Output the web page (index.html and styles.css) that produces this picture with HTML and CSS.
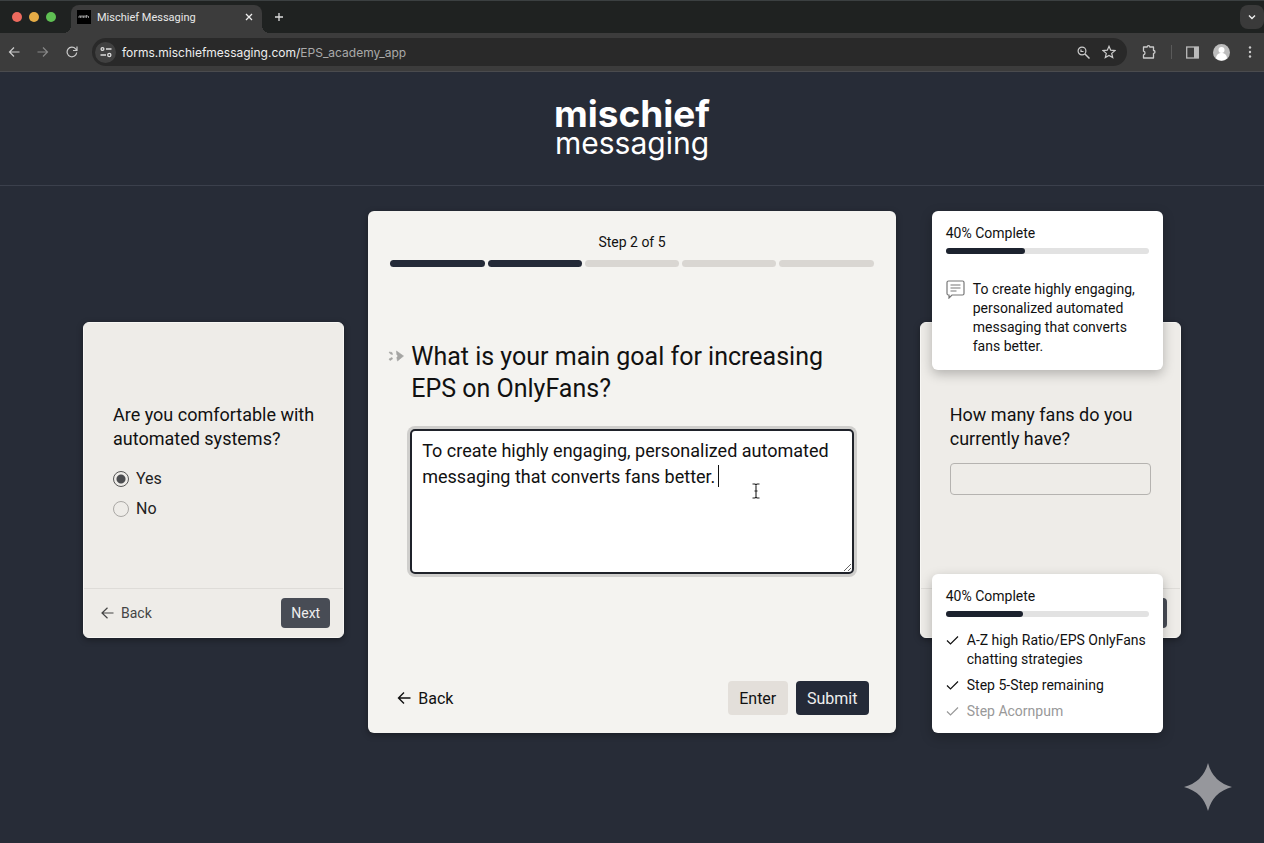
FILE: index.html
```html
<!DOCTYPE html>
<html lang="en">
<head>
  <meta charset="UTF-8" />
  <meta name="viewport" content="width=device-width, initial-scale=1.0" />
  <title>Mischief Messaging</title>
  <link rel="stylesheet" href="styles.css">
</head>
<body>
  <!-- Browser window -->
  <div class="browser">
    <div class="tab-strip">
      <div class="lights">
        <span class="light red"></span>
        <span class="light yellow"></span>
        <span class="light green"></span>
      </div>
      <div class="tab">
        <svg class="favicon" viewBox="0 0 14 14"><rect width="14" height="14" fill="#000"/><path d="M2 6v2M3.500 6v2M5 6v2M6.500 6v2M8 6v2M9.500 5v3M11.500 6v2M2 6h9" stroke="#aaa" stroke-width=".8"/></svg>
        <span class="tab-title">Mischief Messaging</span>
        <button class="icon-btn" aria-label="Close tab">
          <svg width="8" height="8" viewBox="0 0 8 8"><path d="M1 1l6 6M7 1L1 7" stroke="#eee" stroke-width="1.300"/></svg>
        </button>
      </div>
      <button class="icon-btn new-tab" aria-label="New tab">
        <svg width="10" height="10" viewBox="0 0 10 10"><path d="M5 1v8M1 5h8" stroke="#ddd" stroke-width="1.300"/></svg>
      </button>
      <button class="icon-btn tab-menu" aria-label="Search tabs">
        <svg width="8" height="6" viewBox="0 0 8 6"><path d="M1 1.500l3 3 3-3" fill="none" stroke="#eee" stroke-width="1.400"/></svg>
      </button>
    </div>
    <div class="toolbar">
      <div class="nav">
        <button class="icon-btn" aria-label="Back">
          <svg width="12" height="12" viewBox="0 0 12 12"><path d="M11.500 6H1.500M6 1.500L1.500 6 6 10.500" fill="none" stroke="#ccc" stroke-width="1.200"/></svg>
        </button>
        <button class="icon-btn" aria-label="Forward">
          <svg width="12" height="12" viewBox="0 0 12 12"><path d="M.5 6h10M6 1.500L10.500 6 6 10.500" fill="none" stroke="#888" stroke-width="1.200"/></svg>
        </button>
        <button class="icon-btn" aria-label="Reload">
          <svg width="12" height="12" viewBox="0 0 12 12"><path d="M10.700 6.500A4.800 4.800 0 1 1 9.600 2.900L11 4.300M11 .5v4H7" fill="none" stroke="#ccc" stroke-width="1.200"/></svg>
        </button>
      </div>
      <div class="address">
        <button class="site-info" aria-label="Site information">
          <svg width="12" height="12" viewBox="0 0 12 12" fill="none" stroke="#ddd" stroke-width="1.300"><circle cx="2.500" cy="3" r="1.400"/><path d="M6 3h5.500M.5 9H6"/><circle cx="9.300" cy="9" r="1.600"/></svg>
        </button>
        <span class="url">forms.mischiefmessaging.com/<span class="path">EPS_academy_app</span></span>
        <button class="icon-btn" aria-label="Zoom">
          <svg width="13" height="13" viewBox="0 0 13 13" fill="none" stroke="#ccc" stroke-width="1.200"><circle cx="5" cy="5" r="3.900"/><path d="M8 8l4.500 4.500" stroke-width="1.500"/><path d="M4 3.500v2h2.500"/></svg>
        </button>
        <button class="icon-btn" aria-label="Bookmark">
          <svg width="14" height="14" viewBox="0 0 14 14"><path d="M7 1.300l1.700 3.900 4.200.4-3.200 2.800 1 4.200L7 10.400l-3.700 2.200 1-4.200L1.100 5.600l4.200-.4z" fill="none" stroke="#ccc" stroke-width="1.200"/></svg>
        </button>
      </div>
      <button class="icon-btn" aria-label="Extensions">
        <svg width="16" height="16" viewBox="0 0 16 16"><path d="M3 3h3.200c0-1.900 2.600-1.900 2.600 0H12.500v3.500c2 0 2 2.800 0 2.800V14H2.500v-3.200c2-.3 2-3.300 0-3.600V3z" fill="none" stroke="#ccc" stroke-width="1.300" stroke-linejoin="round"/></svg>
      </button>
      <span class="divider"></span>
      <button class="icon-btn" aria-label="Side panel">
        <svg width="13" height="13" viewBox="0 0 13 13"><rect x=".7" y="1" width="11.600" height="11" fill="none" stroke="#bbb" stroke-width="1.300"/><path d="M8 1h4.500v11H8z" fill="#bbb"/></svg>
      </button>
      <button class="icon-btn profile" aria-label="Profile">
        <svg width="17" height="17" viewBox="0 0 17 17"><circle cx="8.500" cy="8.500" r="8.500" fill="#bdbdbd"/><circle cx="8.500" cy="6" r="3" fill="#fff"/><path d="M3 14.500c0-7.300 11-7.300 11 0a8.500 8.500 0 0 1-11 0z" fill="#fff"/></svg>
      </button>
      <button class="icon-btn" aria-label="Menu">
        <svg width="4" height="12" viewBox="0 0 4 12" fill="#ccc"><circle cx="2" cy="1.500" r="1.200"/><circle cx="2" cy="6" r="1.200"/><circle cx="2" cy="10.500" r="1.200"/></svg>
      </button>
    </div>
  </div>

  <header class="site-header">
    <div class="logo">
      <span class="logo-top">mischief</span>
      <span class="logo-bottom">messaging</span>
    </div>
  </header>

  <main class="steps">
    <!-- Previous question -->
    <form class="card side-card">
      <div class="side-body">
        <h2>Are you comfortable with automated systems?</h2>
        <div class="options">
          <label><input type="radio" name="automated" checked> Yes</label>
          <label><input type="radio" name="automated"> No</label>
        </div>
      </div>
      <div class="side-footer">
        <button type="button" class="back">
          <svg width="13" height="12" viewBox="0 0 13 12"><path d="M12.500 6H1M6.500 .8L1 6l5.500 5.200" fill="none" stroke="currentColor" stroke-width="1.200"/></svg>
          Back
        </button>
        <button type="button" class="next">Next</button>
      </div>
    </form>

    <!-- Current question -->
    <form class="card main-card">
      <p class="step-label">Step 2 of 5</p>
      <div class="segments">
        <span class="segment done"></span>
        <span class="segment done"></span>
        <span class="segment"></span>
        <span class="segment"></span>
        <span class="segment"></span>
      </div>
      <div class="question">
        <svg class="marker" width="16" height="12" viewBox="0 0 16 12" fill="#a5a5a3"><path d="M1 2l3 .5.5 2-2-.5zM1 9l3-1.500.5 1.500L2 10.500zM8.500 1L15.500 6l-6 5-.7-3.500L10 6 8.800 4.500z" stroke="#a5a5a3" stroke-width=".6"/></svg>
        <h1><label for="goal">What is your main goal for increasing EPS on OnlyFans?</label></h1>
      </div>
      <div class="answer">
        <textarea id="goal" spellcheck="false">To create highly engaging, personalized automated messaging that converts fans better.</textarea>
        <span class="caret"></span>
        <svg class="ibeam" width="8" height="16" viewBox="0 0 8 16"><path d="M.5 1H3l1 1 1-1h2.500M4 2v12M.5 15H3l1-1 1 1h2.500M2.500 8h3" fill="none" stroke="#222" stroke-width="1.100"/></svg>
      </div>
      <div class="main-footer">
        <button type="button" class="back">
          <svg width="14" height="12" viewBox="0 0 14 12"><path d="M13.500 6H1.500M7 .5L1.500 6 7 11.500" fill="none" stroke="currentColor" stroke-width="1.400"/></svg>
          Back
        </button>
        <button type="button" class="enter">Enter</button>
        <button type="button" class="submit">Submit</button>
      </div>
    </form>

    <!-- Next question with the two summary cards on top -->
    <div class="stack">
      <form class="card side-card">
        <div class="side-body">
          <h2><label for="fans">How many fans do you currently have?</label></h2>
          <input type="text" id="fans" class="fans">
        </div>
        <div class="side-footer">
          <button type="button" class="next">Next</button>
        </div>
      </form>

      <section class="summary summary-top">
        <p>40% Complete</p>
        <div class="bar"><div class="bar-fill" style="width: 39%"></div></div>
        <div class="message">
          <svg width="19" height="19" viewBox="0 0 19 19" fill="none" stroke="#777" stroke-width="1.200"><path d="M2.500 1h14A1.500 1.500 0 0 1 18 2.500v11a1.500 1.500 0 0 1-1.500 1.500H6l-3 3v-3h-.5A1.500 1.500 0 0 1 1 13.500v-11A1.500 1.500 0 0 1 2.500 1z"/><path d="M4.500 5h10M4.500 8h10M4.500 11h6"/></svg>
          <p>To create highly engaging, personalized automated messaging that converts fans better.</p>
        </div>
      </section>

      <section class="summary summary-bottom">
        <p>40% Complete</p>
        <div class="bar"><div class="bar-fill" style="width: 38%"></div></div>
        <ul class="checklist">
          <li><svg width="13" height="19" viewBox="0 0 13 19"><path d="M1 9.500l3.500 3.500L12 5.500" fill="none" stroke="currentColor" stroke-width="1.200"/></svg>A-Z high Ratio/EPS OnlyFans chatting strategies</li>
          <li><svg width="13" height="19" viewBox="0 0 13 19"><path d="M1 9.500l3.500 3.500L12 5.500" fill="none" stroke="currentColor" stroke-width="1.200"/></svg>Step 5-Step remaining</li>
          <li class="pending"><svg width="13" height="19" viewBox="0 0 13 19"><path d="M1 9.500l3.500 3.500L12 5.500" fill="none" stroke="currentColor" stroke-width="1.200"/></svg>Step Acornpum</li>
        </ul>
      </section>
    </div>
  </main>

  <svg class="sparkle" width="48" height="48" viewBox="0 0 48 48"><path d="M24 0Q29 19 48 24 29 29 24 48 19 29 0 24 19 19 24 0z" fill="#96979c"/></svg>
</body>
</html>
```
FILE: styles.css
```css
* {
  box-sizing: border-box;
}
body {
  margin: 0;
  min-height: 100vh;
  background-color: #272c37;
  font-family: Roboto, "Liberation Sans", sans-serif;
  font-size: 14px;
  color: #111;
}
h1, h2, p, ul {
  margin: 0;
  padding: 0;
  font-weight: 400;
}
svg {
  display: block;
  flex: none;
}
button {
  border: 0;
  padding: 0;
  background: none;
  font-family: inherit;
  cursor: pointer;
}

/* browser window */
.browser {
  border-top: 1px solid #3b4041;
}
.tab-strip {
  display: flex;
  align-items: center;
  height: 32px;
  padding-left: 12px;
  background-color: #1f2221;
}
.lights {
  display: flex;
  gap: 7px;
  width: 59px;
}
.light {
  width: 10px;
  height: 10px;
  border-radius: 50%;
}
.red {
  background-color: #ed6a5e;
}
.yellow {
  background-color: #e5ac46;
}
.green {
  background-color: #5fc053;
}
.tab {
  position: relative;
  display: flex;
  align-items: center;
  align-self: flex-end;
  width: 191px;
  height: 28px;
  padding: 0 9px 4px 6px;
  border-radius: 8px 8px 0 0;
  background-color: #3c3c3c;
}
.tab::before,
.tab::after {
  content: "";
  position: absolute;
  bottom: 0;
  width: 8px;
  height: 8px;
}
.tab::before {
  left: -8px;
  background: radial-gradient(circle at 0 0, #1f2221 8px, #3c3c3c 8px);
}
.tab::after {
  right: -8px;
  background: radial-gradient(circle at 100% 0, #1f2221 8px, #3c3c3c 8px);
}
.favicon {
  width: 14px;
  height: 14px;
  margin-right: 6px;
}
.tab-title {
  flex: 1;
  font-size: 11px;
  color: #e8e8e8;
}
.icon-btn {
  display: flex;
  align-items: center;
  justify-content: center;
}
.new-tab {
  margin-left: 12px;
}
.tab-menu {
  width: 24px;
  height: 24px;
  margin-left: auto;
  border-radius: 8px;
  background-color: #3a3a3a;
}
.toolbar {
  display: flex;
  align-items: center;
  gap: 14px;
  height: 39px;
  padding: 0 12px 0 8px;
  background-color: #3c3c3c;
  border-bottom: 1px solid #4a4b4e;
}
.nav {
  display: flex;
  gap: 17px;
}
.address {
  display: flex;
  align-items: center;
  flex: 1;
  gap: 12px;
  height: 28px;
  padding: 0 11px 0 3px;
  border-radius: 14px;
  background-color: #292929;
}
.site-info {
  display: flex;
  align-items: center;
  justify-content: center;
  width: 21px;
  height: 21px;
  border-radius: 50%;
  background-color: #414141;
}
.url {
  flex: 1;
  margin-left: -6px;
  font-family: Inter, sans-serif;
  font-size: 12px;
  color: #eee;
}
.path {
  color: #aaa;
}
.divider {
  width: 1px;
  height: 14px;
  background-color: #5a5a5a;
}
.profile {
  margin-right: 4px;
}

/* logo */
.site-header {
  display: flex;
  justify-content: center;
  height: 114px;
  padding-top: 22px;
  border-bottom: 1px solid #3b404c;
}
.logo {
  display: flex;
  flex-direction: column;
  align-items: center;
  font-family: Inter, sans-serif;
  color: #fff;
}
.logo-top {
  font-size: 37px;
  line-height: 40px;
  font-weight: 700;
}
.logo-bottom {
  font-size: 30px;
  line-height: 18px;
}

/* question cards */
.steps {
  display: grid;
  grid-template-columns: 261fr 527fr 261fr;
  gap: 24px;
  max-width: 1098px;
  margin: 25px auto 0;
}
.card {
  border-radius: 6px;
  box-shadow: 0 2px 6px rgba(0, 0, 0, 0.35);
}
.side-card {
  align-self: start;
  margin-top: 111px;
  background-color: #eeece8;
  border: 1px solid #f8f7f4;
}
.side-body {
  height: 265px;
  padding: 80px 29px 0;
}
.side-body h2 {
  font-size: 18px;
  line-height: 24px;
}
.options {
  display: flex;
  flex-direction: column;
  gap: 10px;
  margin-top: 18px;
}
.options label {
  display: flex;
  align-items: center;
  gap: 7px;
  font-size: 16px;
  line-height: 20px;
  color: #222;
}
.options input {
  appearance: none;
  width: 16px;
  height: 16px;
  margin: 0;
  border: 1px solid #aaa8a5;
  border-radius: 50%;
}
.options input:checked {
  border-color: #555;
  background: radial-gradient(circle, #4c4d50 4px, transparent 5px);
}
.fans {
  display: block;
  width: 100%;
  height: 32px;
  margin-top: 12px;
  border: 1px solid #b5b3b0;
  border-radius: 4px;
  background: none;
}
.side-footer {
  display: flex;
  align-items: center;
  height: 49px;
  padding: 0 13px 0 17px;
  border-top: 1px solid #dedcd8;
}
.back {
  display: flex;
  align-items: center;
  gap: 7px;
  font-size: 14px;
  color: #444;
}
.next {
  width: 49px;
  height: 30px;
  margin-left: auto;
  border-radius: 4px;
  background-color: #484c55;
  font-size: 14px;
  color: #eee;
}
.main-card {
  padding: 21px 22px 18px;
  background-color: #f4f3f0;
}
.step-label {
  line-height: 20px;
  text-align: center;
}
.segments {
  display: flex;
  gap: 3px;
  margin-top: 8px;
}
.segment {
  flex: 1;
  height: 7px;
  border-radius: 4px;
  background-color: #d9d6d2;
}
.segment.done {
  background-color: #242a38;
}
.question {
  display: flex;
  gap: 7px;
  margin-top: 74px;
}
.marker {
  margin: 9px 0 0 -2px;
}
.question h1 {
  font-size: 25px;
  line-height: 32px;
}
.answer {
  position: relative;
  margin: 24px 20px 0;
}
.answer textarea {
  display: block;
  width: 100%;
  height: 145px;
  padding: 7px 10px;
  border: 2px solid #1f222a;
  border-radius: 5px;
  outline: 0;
  box-shadow: 0 0 0 3px #cfcecc;
  font-family: inherit;
  font-size: 18px;
  line-height: 26px;
  color: #111;
}
.caret {
  position: absolute;
  left: 308px;
  top: 36px;
  width: 1px;
  height: 22px;
  background-color: #111;
}
.ibeam {
  position: absolute;
  left: 342px;
  top: 54px;
}
.main-footer {
  display: flex;
  align-items: center;
  gap: 8px;
  margin-top: 107px;
  padding: 0 5px 0 7px;
}
.main-footer button {
  height: 34px;
  font-size: 16px;
}
.main-footer .back {
  margin-right: auto;
  color: #111;
}
.enter,
.submit {
  border-radius: 4px;
}
.enter {
  width: 60px;
  background-color: #e3dfda;
  color: #111;
}
.submit {
  width: 73px;
  background-color: #242a38;
  color: #eee;
}

/* summary cards */
.stack {
  position: relative;
}
.summary {
  position: absolute;
  left: 12px;
  right: 18px;
  padding: 12px 14px;
  border-radius: 6px;
  background-color: #fff;
  box-shadow: 0 4px 12px rgba(0, 0, 0, 0.25);
  line-height: 20px;
}
.summary-top {
  top: 0;
  padding-bottom: 14px;
}
.summary-bottom {
  bottom: 0;
}
.bar {
  height: 6px;
  margin-top: 5px;
  border-radius: 3px;
  background-color: #e2e2e2;
}
.bar-fill {
  height: 6px;
  border-radius: 3px;
  background-color: #1c222e;
}
.message {
  display: flex;
  gap: 8px;
  margin-top: 26px;
  line-height: 19px;
}
.checklist {
  display: flex;
  flex-direction: column;
  gap: 7px;
  margin-top: 14px;
  list-style: none;
  line-height: 19px;
}
.checklist li {
  display: flex;
  gap: 8px;
}
.pending {
  color: #999;
}

.sparkle {
  position: absolute;
  right: 32px;
  bottom: 32px;
}
```
